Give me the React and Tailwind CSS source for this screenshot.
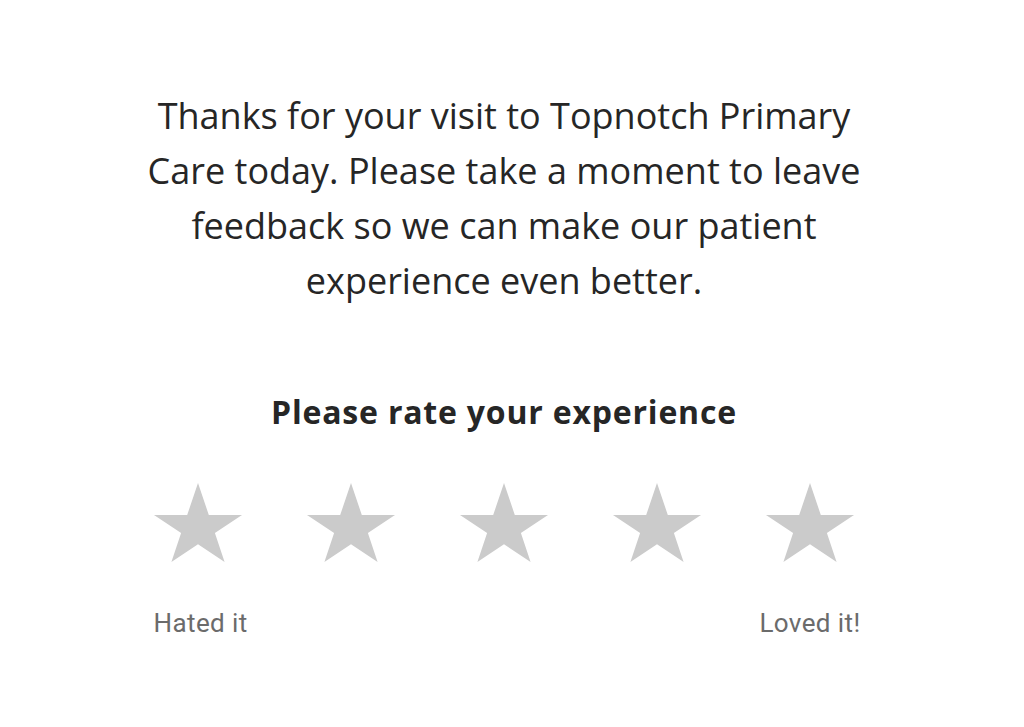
import React from "react";

function Star() {
  return (
    <svg width="88" height="79" viewBox="0 0 88 79" className="block shrink-0">
      <polygon
        points="44,0 54.8,32 88,32 60.9,50.1 70.6,79 44,61.3 17.4,79 27.1,50.1 0,32 33.2,32"
        fill="#cbcbcb"
      />
    </svg>
  );
}

export default function App() {
  const lines = [
    "Thanks for your visit to Topnotch Primary",
    "Care today. Please take a moment to leave",
    "feedback so we can make our patient",
    "experience even better.",
  ];
  return (
    <div className="w-[1024px] h-[727px] bg-white pr-[16px] pt-[88px] text-[#262626]">
      <div
        className="flex flex-col items-center text-[36px] leading-[55px]"
        style={{ fontFamily: '"Open Sans", "Noto Sans", sans-serif' }}
      >
        {lines.map((l) => (
          <div key={l} className="whitespace-nowrap">{l}</div>
        ))}
      </div>
      <div
        className="mt-[84px] text-center text-[32px] leading-[40px] font-bold tracking-[0.8px]"
        style={{ fontFamily: '"Open Sans", "Noto Sans", sans-serif' }}
      >
        Please rate your experience
      </div>
      <div className="mt-[51px] flex justify-center gap-[65px]">
        <Star />
        <Star />
        <Star />
        <Star />
        <Star />
      </div>
      <div
        className="mx-auto mt-[46px] flex w-[707px] translate-x-[3px] justify-between text-[26px] leading-[30px] tracking-[0.4px] text-[#6b6b6b]"
        style={{ fontFamily: "Roboto, sans-serif" }}
      >
        <span>Hated it</span>
        <span>Loved it!</span>
      </div>
    </div>
  );
}
